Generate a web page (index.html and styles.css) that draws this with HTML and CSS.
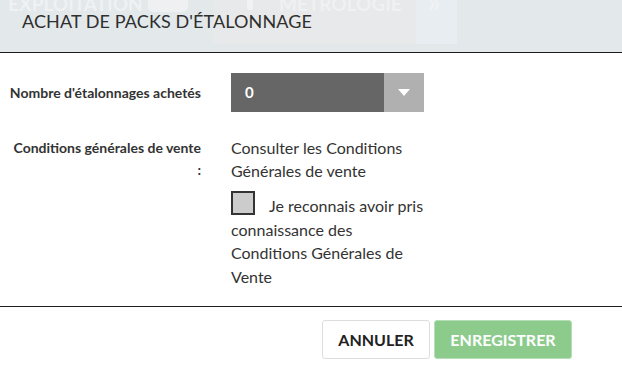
FILE: index.html
```html
<!DOCTYPE html>
<html lang="fr">
<head>
<meta charset="utf-8">
<title>Achat de packs d'étalonnage</title>
<link rel="stylesheet" href="styles.css">
</head>
<body>
<div class="modal">
  <header class="modal-header">
    <div class="ghost-nav" aria-hidden="true">
      <div class="ghost-item ghost-a"><span class="ghost-text">EXPLOITATION</span></div>
      <div class="ghost-pill"></div>
      <div class="ghost-item ghost-b"><span class="ghost-icon"></span><span class="ghost-text">MÉTROLOGIE</span></div>
      <div class="ghost-item ghost-c"><span class="ghost-text">»</span></div>
    </div>
    <h1 class="modal-title">ACHAT DE PACKS D'ÉTALONNAGE</h1>
  </header>
  <main class="modal-body">
    <div class="form-row row-select">
      <label class="form-label">Nombre d'étalonnages achetés</label>
      <div class="form-control">
        <div class="select">
          <span class="select-value">0</span>
          <span class="select-arrow"><svg width="12" height="7" viewBox="0 0 12 7"><polygon points="0,0 12,0 6,7" fill="#fff"/></svg></span>
        </div>
      </div>
    </div>
    <div class="form-row row-cgv">
      <label class="form-label">Conditions générales de vente :</label>
      <div class="form-control text">
        <p class="cgv-link">Consulter les Conditions Générales de vente</p>
        <p class="cgv-check"><span class="checkbox"></span>Je reconnais avoir pris connaissance des Conditions Générales de Vente</p>
      </div>
    </div>
  </main>
  <footer class="modal-footer">
    <button class="btn btn-cancel">ANNULER</button>
    <button class="btn btn-save">ENREGISTRER</button>
  </footer>
</div>
</body>
</html>
```
FILE: styles.css
```css
html, body {
  margin: 0;
  padding: 0;
  background: #ffffff;
}
body {
  font-family: Lato, "Noto Sans", sans-serif;
  color: #333333;
  width: 622px;
  height: 366px;
  overflow: hidden;
}
.modal {
  display: flex;
  flex-direction: column;
}
.modal-header {
  position: relative;
  height: 52px;
  background: #e3e8eb;
  border-bottom: 1px solid #1e1e1e;
  overflow: hidden;
}
.ghost-nav {
  position: absolute;
  left: 0;
  top: 0;
  width: 100%;
  height: 44px;
  display: flex;
}
.ghost-item {
  height: 44px;
  display: flex;
  align-items: flex-start;
}
.ghost-text {
  font-family: Lato, sans-serif;
  font-size: 19px;
  font-weight: 700;
  color: #eff1f3;
  margin-top: -8px;
  line-height: 24px;
}
.ghost-a {
  width: 148px;
  padding-left: 8px;
  box-sizing: border-box;
}
.ghost-pill {
  width: 40px;
  height: 12px;
  background: #eff0f1;
  border-radius: 0 0 5px 5px;
  margin-right: 25px;
}
.ghost-b {
  width: 203px;
  background: #e8e9ea;
  padding-left: 34px;
  box-sizing: border-box;
  gap: 26px;
}
.ghost-icon {
  width: 6px;
  height: 10px;
  background: #f0f2f4;
  border-radius: 0 0 3px 3px;
}
.ghost-c {
  width: 41px;
  background: #e7edf1;
  padding-left: 11px;
  box-sizing: border-box;
}
.ghost-c .ghost-text {
  font-size: 30px;
  margin-top: -11px;
}
.modal-title {
  position: relative;
  margin: 0;
  padding: 10px 0 0 22px;
  font-size: 18px;
  font-weight: 400;
  line-height: 23px;
  color: #2f2f2f;
  letter-spacing: 0.1px;
}
.modal-body {
  height: 254px;
  box-sizing: border-box;
  padding-top: 20px;
  border-bottom: 1px solid #1e1e1e;
}
.form-row {
  display: flex;
  gap: 30px;
}
.form-label {
  width: 192px;
  padding-left: 9px;
  box-sizing: content-box;
  text-align: right;
  font-size: 14px;
  font-weight: 700;
  color: #333333;
}
.row-select .form-label {
  align-self: center;
}
.form-control {
  width: 193px;
}
.select {
  height: 39px;
  display: flex;
  background: #666666;
}
.select-value {
  flex: 1;
  color: #ffffff;
  font-weight: 700;
  font-size: 15px;
  line-height: 39px;
  padding-left: 14px;
}
.select-arrow {
  width: 40px;
  background: #b0b0b0;
  display: flex;
  align-items: center;
  justify-content: center;
}
.row-cgv {
  margin-top: 24px;
}
.row-cgv .form-label {
  line-height: 22px;
  padding-top: 1px;
}
.form-control.text {
  font-size: 16px;
  line-height: 23.4px;
  color: #333333;
}
.form-control p {
  margin: 0;
}
.form-control .cgv-check {
  margin-top: 8.5px;
}
.checkbox {
  display: inline-block;
  width: 20px;
  height: 20px;
  background: #cccccc;
  border: 2px solid #333333;
  vertical-align: -3px;
  margin-right: 14px;
}
.modal-footer {
  display: flex;
  justify-content: flex-end;
  gap: 4px;
  padding: 13px 50px 0 0;
}
.btn {
  height: 39px;
  font-family: Lato, sans-serif;
  font-size: 16px;
  font-weight: 700;
  border-radius: 3px;
  padding: 0;
  cursor: pointer;
}
.btn-cancel {
  width: 108px;
  background: #ffffff;
  border: 1px solid #dddddd;
  color: #222222;
}
.btn-save {
  width: 138px;
  background: #8dcb8d;
  border: 1px solid #b4deb4;
  color: #ffffff;
}
```
